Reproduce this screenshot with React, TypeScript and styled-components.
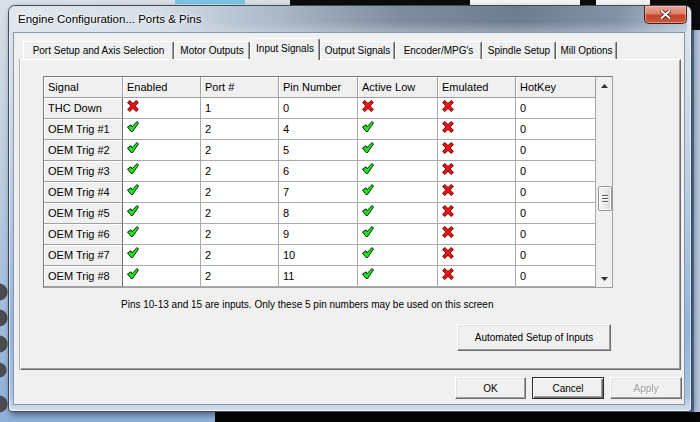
import React from 'react';
import styled, { createGlobalStyle } from 'styled-components';

const UI_FONT = `'Liberation Sans', Arial, sans-serif`;

const GlobalStyle = createGlobalStyle`
    html, body {
        margin: 0;
        padding: 0;
    }
    body {
        width: 700px;
        height: 422px;
        overflow: hidden;
        font-family: ${UI_FONT};
    }
`;

const Desktop = styled.div`
    width: 700px;
    height: 422px;
    box-sizing: border-box;
    overflow: hidden;
    padding: 5px 0 0 8px;
    background:
        radial-gradient(circle at -1px 292px, #4a4c50 0 8px, transparent 9px),
        radial-gradient(circle at -1px 318px, #4a4c50 0 8px, transparent 9px),
        radial-gradient(circle at -1px 344px, #4a4c50 0 8px, transparent 9px),
        radial-gradient(circle at -1px 370px, #4a4c50 0 7px, transparent 8px),
        radial-gradient(circle at -1px 404px, #4a4c50 0 8px, transparent 9px),
        linear-gradient(#060606, #060606) 215px 412px / 485px 10px no-repeat,
        linear-gradient(#f4f4f4, #f4f4f4) 470px 0 / 110px 5px no-repeat,
        linear-gradient(#f4f4f4, #f4f4f4) 596px 0 / 54px 5px no-repeat,
        linear-gradient(#0c0c0c, #0c0c0c) 290px 0 / 410px 30px no-repeat,
        linear-gradient(#78c4e6, #78c4e6) 175px 0 / 70px 4px no-repeat,
        linear-gradient(90deg, transparent 0 691px, #5f86bb 691px 694px, #b8c9dc 694px),
        linear-gradient(to bottom, #d9dfe6 0%, #b9cbe0 45%, #8eb0da 100%);
`;

const Window = styled.div`
    width: 684px;
    height: 407px;
    box-sizing: border-box;
    display: flex;
    flex-direction: column;
    padding: 0 6px 6px 4px;
    border: 1px solid rgba(25, 38, 56, 0.8);
    border-radius: 7px 7px 4px 4px;
    background: linear-gradient(to bottom, #dfe6ee 0%, #c4d4e6 35%, #94b3db 80%, #a8c1e1 96%, #d7e0ea 100%);
    box-shadow: inset 0 0 0 1px rgba(255, 255, 255, 0.6), 2px 3px 6px rgba(0, 0, 0, 0.45);
`;

const TitleBar = styled.div`
    height: 26px;
    flex: none;
    display: flex;
    align-items: flex-start;
    margin: 0 -2px 0 -4px;
    padding-left: 9px;
    background:
        linear-gradient(to bottom, rgba(255, 255, 255, 0) 60%, rgba(220, 230, 240, 0.35) 100%),
        linear-gradient(90deg, #e1e7ee 0%, #d4dde7 22%, #a9b7c7 40%, #7d8c9e 58%, #6d7c8f 75%, #8393a7 90%, #b7c6d7 100%);
    border-radius: 6px 6px 0 0;
`;

const TitleText = styled.div`
    flex: 1;
    padding-top: 6px;
    font-size: 11.5px;
    line-height: 14px;
    color: #000;
    text-shadow: 0 0 6px #fff, 0 0 3px #fff;
`;

const CloseButton = styled.div`
    width: 43px;
    height: 18px;
    box-sizing: border-box;
    display: flex;
    align-items: center;
    justify-content: center;
    border: 1px solid #4f1d17;
    border-top: none;
    border-radius: 0 0 5px 5px;
    background: linear-gradient(to bottom, #e9a897 0%, #dd8068 45%, #c7432b 55%, #c85a3e 100%);
    box-shadow: inset 0 0 0 1px rgba(255, 220, 210, 0.45);
`;

const Client = styled.div`
    flex: 1;
    display: flex;
    flex-direction: column;
    box-sizing: border-box;
    padding: 5px 3px 0 6px;
    background: #f0f0f0;
    border: 1px solid #8796a9;
`;

const TabStrip = styled.div`
    display: flex;
    align-items: flex-end;
    height: 21px;
    padding-left: 3px;
    position: relative;
    z-index: 1;
`;

const Tab = styled.div<{ $width: number; $active?: boolean }>`
    width: ${(p) => p.$width}px;
    height: ${(p) => (p.$active ? 22 : 18)}px;
    margin-bottom: ${(p) => (p.$active ? -1 : 0)}px;
    box-sizing: border-box;
    display: flex;
    align-items: center;
    justify-content: center;
    padding-bottom: ${(p) => (p.$active ? 2 : 0)}px;
    font-size: 10px;
    color: #000;
    background: #f0f0f0;
    border-top: 1px solid #fff;
    border-left: 1px solid #fff;
    border-right: 1px solid #5f5f5f;
    border-radius: 2px 2px 0 0;
    box-shadow: inset -1px 0 0 #a0a0a0;
    white-space: nowrap;
`;

const Panel = styled.div`
    height: 311px;
    box-sizing: border-box;
    display: flex;
    flex-direction: column;
    padding: 16px 0 0 22px;
    border-top: 1px solid #fff;
    border-left: 1px solid #fff;
    border-right: 1px solid #6a6a6a;
    border-bottom: 1px solid #6a6a6a;
    box-shadow: inset -1px -1px 0 #a0a0a0, -1px 0 0 #b0b0b0;
`;

const Grid = styled.div`
    width: 570px;
    height: 212px;
    box-sizing: border-box;
    display: flex;
    border: 1px solid #a0a0a0;
    border-top-color: #7a7a7a;
    border-left-color: #7a7a7a;
    background: #fff;
`;

const Table = styled.div`
    display: grid;
    grid-template-columns: 79px 78px 78px 79px 80px 78px 80px;
    grid-auto-rows: 21px;
`;

const HeaderCell = styled.div`
    box-sizing: border-box;
    padding-left: 4px;
    font-size: 11px;
    line-height: 20px;
    color: #000;
    background: #f0f0f0;
    border-right: 1px solid #a0a0a0;
    border-bottom: 1px solid #a0a0a0;
    box-shadow: inset 1px 1px 0 #fff;
    white-space: nowrap;
`;

const RowHeaderCell = styled(HeaderCell)`
    border-right-color: #6f6f6f;
`;

const Cell = styled.div`
    box-sizing: border-box;
    padding-left: 4px;
    font-size: 11px;
    line-height: 20px;
    color: #000;
    background: #fff;
    border-right: 1px solid #ababab;
    border-bottom: 1px solid #ababab;
`;

const IconCell = styled(Cell)`
    display: flex;
    align-items: flex-start;
    padding-top: 2px;
`;

const ScrollBar = styled.div`
    width: 16px;
    display: flex;
    flex-direction: column;
    background: #f0f0f0;
    border-left: 1px solid #ececec;
`;

const ScrollArrow = styled.div`
    height: 17px;
    flex: none;
    display: flex;
    align-items: center;
    justify-content: center;
`;

const ScrollTrack = styled.div`
    flex: 1;
    display: flex;
    flex-direction: column;
    align-items: center;
`;

const ScrollThumb = styled.div<{ $top: number }>`
    margin-top: ${(p) => p.$top}px;
    width: 14px;
    height: 25px;
    box-sizing: border-box;
    display: flex;
    flex-direction: column;
    align-items: center;
    justify-content: center;
    gap: 2px;
    border: 1px solid #979797;
    border-radius: 2px;
    background: linear-gradient(90deg, #f6f6f6 0%, #e9e9e9 50%, #dcdcdc 100%);
    box-shadow: inset 0 0 0 1px #fff;
`;

const GripLine = styled.div`
    width: 6px;
    height: 1px;
    background: #5a5a5a;
    box-shadow: 0 1px 0 #fff;
`;

const Note = styled.div`
    margin: 11px 0 0 78px;
    font-size: 10px;
    line-height: 12px;
    color: #000;
`;

const SetupRow = styled.div`
    width: 570px;
    display: flex;
    justify-content: flex-end;
    margin-top: 13px;
    padding-right: 2px;
    box-sizing: border-box;
`;

const Button = styled.div<{ $width: number; $height: number; $default?: boolean; $disabled?: boolean }>`
    width: ${(p) => p.$width}px;
    height: ${(p) => p.$height}px;
    box-sizing: border-box;
    display: flex;
    align-items: center;
    justify-content: center;
    font-size: 10px;
    color: ${(p) => (p.$disabled ? '#a0a0a0' : '#000')};
    text-shadow: ${(p) => (p.$disabled ? '1px 1px 0 #fff' : 'none')};
    background: #f0f0f0;
    border: 1px solid;
    border-color: ${(p) => (p.$default ? '#2b2b2b' : '#fff #6a6a6a #6a6a6a #fff')};
    box-shadow: ${(p) =>
        p.$default
            ? 'inset 1px 1px 0 #fff, inset -1px -1px 0 #6a6a6a, inset -2px -2px 0 #a0a0a0'
            : 'inset -1px -1px 0 #a0a0a0, inset 1px 1px 0 #e3e3e3'};
`;

const ButtonRow = styled.div`
    display: flex;
    justify-content: flex-end;
    gap: 6px;
    margin: 7px -1px 0 0;
`;

const GreenCheck = () => (
    <svg width="12" height="11" viewBox="0 0 12 11">
        <path
            d="M0.5 6 L4 3.8 L5 5.8 L10 0.5 L11.5 2 L5.6 10.5 L4 10.5 Z"
            fill="#18e818"
            stroke="#000"
            strokeWidth="0.85"
            strokeLinejoin="round"
        />
    </svg>
);

const RedX = () => (
    <svg width="12" height="12" viewBox="0 0 12 12">
        <path
            d="M0.6 2.6 L2.8 0.5 L6 3.5 L9.2 0.5 L11.4 2.6 L8.2 5.9 L11.4 9.4 L9.2 11.5 L6 8.4 L2.8 11.5 L0.6 9.4 L3.8 5.9 Z"
            fill="#f21010"
            stroke="#3a0000"
            strokeWidth="0.85"
            strokeLinejoin="round"
        />
    </svg>
);

const CloseGlyph = () => (
    <svg width="11" height="9" viewBox="0 0 11 9">
        <path d="M1.5 1 L9.5 8 M9.5 1 L1.5 8" stroke="#3a1510" strokeWidth="3.6" strokeLinecap="round" />
        <path d="M1.5 1 L9.5 8 M9.5 1 L1.5 8" stroke="#fff" strokeWidth="2" strokeLinecap="round" />
    </svg>
);

const ArrowGlyph = ({ down }: { down?: boolean }) => (
    <svg width="7" height="4" viewBox="0 0 7 4">
        <path d={down ? 'M0 0 L7 0 L3.5 4 Z' : 'M0 4 L7 4 L3.5 0 Z'} fill="#303030" />
    </svg>
);

const TABS = [
    { label: 'Port Setup and Axis Selection', width: 151 },
    { label: 'Motor Outputs', width: 76 },
    { label: 'Input Signals', width: 70, active: true },
    { label: 'Output Signals', width: 75 },
    { label: "Encoder/MPG's", width: 87 },
    { label: 'Spindle Setup', width: 74 },
    { label: 'Mill Options', width: 61 },
];

const COLUMNS = ['Signal', 'Enabled', 'Port #', 'Pin Number', 'Active Low', 'Emulated', 'HotKey'];

type Signal = {
    name: string;
    enabled: boolean;
    port: number;
    pin: number;
    activeLow: boolean;
    emulated: boolean;
    hotKey: number;
};

const SIGNALS: Signal[] = [
    { name: 'THC Down', enabled: false, port: 1, pin: 0, activeLow: false, emulated: false, hotKey: 0 },
    ...[1, 2, 3, 4, 5, 6, 7, 8].map((n) => ({
        name: `OEM Trig #${n}`,
        enabled: true,
        port: 2,
        pin: n + 3,
        activeLow: true,
        emulated: false,
        hotKey: 0,
    })),
];

const Flag = ({ on }: { on: boolean }) => (on ? <GreenCheck /> : <RedX />);

export default function App() {
    return (
        <>
            <GlobalStyle />
            <Desktop>
                <Window>
                    <TitleBar>
                        <TitleText>Engine Configuration... Ports &amp; Pins</TitleText>
                        <CloseButton>
                            <CloseGlyph />
                        </CloseButton>
                    </TitleBar>
                    <Client>
                        <TabStrip>
                            {TABS.map((t) => (
                                <Tab key={t.label} $width={t.width} $active={t.active}>
                                    {t.label}
                                </Tab>
                            ))}
                        </TabStrip>
                        <Panel>
                            <Grid>
                                <Table>
                                    {COLUMNS.map((c) => (
                                        <HeaderCell key={c}>{c}</HeaderCell>
                                    ))}
                                    {SIGNALS.map((s) => (
                                        <React.Fragment key={s.name}>
                                            <RowHeaderCell>{s.name}</RowHeaderCell>
                                            <IconCell>
                                                <Flag on={s.enabled} />
                                            </IconCell>
                                            <Cell>{s.port}</Cell>
                                            <Cell>{s.pin}</Cell>
                                            <IconCell>
                                                <Flag on={s.activeLow} />
                                            </IconCell>
                                            <IconCell>
                                                <Flag on={s.emulated} />
                                            </IconCell>
                                            <Cell>{s.hotKey}</Cell>
                                        </React.Fragment>
                                    ))}
                                </Table>
                                <ScrollBar>
                                    <ScrollArrow>
                                        <ArrowGlyph />
                                    </ScrollArrow>
                                    <ScrollTrack>
                                        <ScrollThumb $top={92}>
                                            <GripLine />
                                            <GripLine />
                                            <GripLine />
                                        </ScrollThumb>
                                    </ScrollTrack>
                                    <ScrollArrow>
                                        <ArrowGlyph down />
                                    </ScrollArrow>
                                </ScrollBar>
                            </Grid>
                            <Note>Pins 10-13 and 15 are inputs. Only these 5 pin numbers may be used on this screen</Note>
                            <SetupRow>
                                <Button $width={154} $height={27}>
                                    Automated Setup of Inputs
                                </Button>
                            </SetupRow>
                        </Panel>
                        <ButtonRow>
                            <Button $width={71} $height={22}>
                                OK
                            </Button>
                            <Button $width={72} $height={22} $default>
                                Cancel
                            </Button>
                            <Button $width={72} $height={22} $disabled>
                                Apply
                            </Button>
                        </ButtonRow>
                    </Client>
                </Window>
            </Desktop>
        </>
    );
}
